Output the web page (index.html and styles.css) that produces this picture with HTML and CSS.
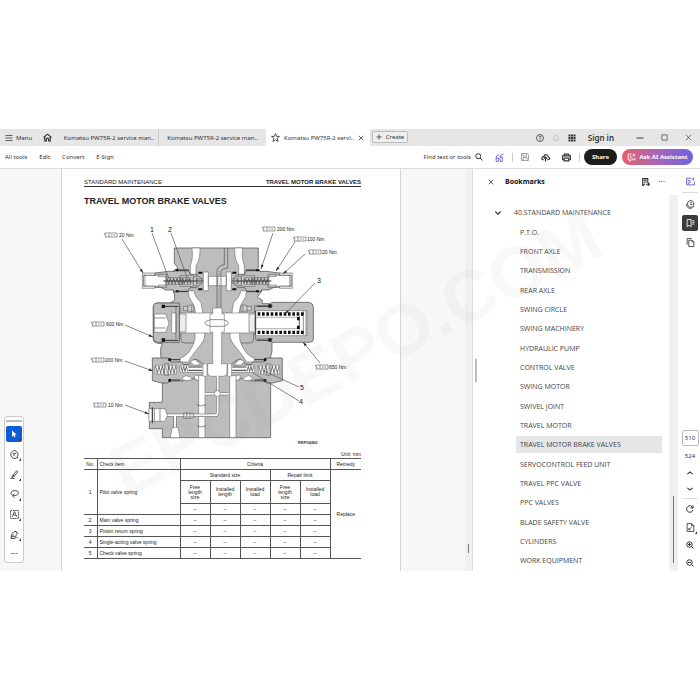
FILE: index.html
```html
<!DOCTYPE html>
<html lang="en">
<head>
<meta charset="utf-8">
<title>Komatsu PW75R-2 service manual</title>
<link rel="stylesheet" href="styles.css">
</head>
<body>
<div class="app">
  <header class="tabs">
    <button class="tab-menu"><svg class="ic" viewBox="0 0 16 16"><path d="M1 3h14M1 8h14M1 13h14"/></svg>Menu</button>
    <button class="tab-home" aria-label="Home"><svg class="ic ic-lg bold" viewBox="0 0 16 16"><path d="M1 8l7-6 7 6M3 7v7h3v-4q2-2 4 0v4h3V7"/></svg></button>
    <button class="tab">Komatsu PW75R-2 service man..</button>
    <button class="tab tab-second">Komatsu PW75R-2 service man..</button>
    <div class="tab active"><svg class="ic ic-lg" viewBox="0 0 16 16"><path d="M8 1l2 5h5l-4 3.500 1.500 5.500L8 12l-4.500 3L5 9.500 1 6h5z"/></svg><span>Komatsu PW75R-2 servi..</span><button class="close" aria-label="Close tab"><svg class="ic ic-xs bold" viewBox="0 0 16 16"><path d="M2 2l12 12M14 2L2 14"/></svg></button></div>
    <button class="create"><svg class="ic ic-xs bold" viewBox="0 0 16 16"><path d="M8 1v14M1 8h14"/></svg>Create</button>
    <div class="window">
      <button aria-label="Help"><svg class="ic" viewBox="0 0 16 16"><circle cx="8" cy="8" r="7"/><path d="M6 6q0-2 2-2t2 2q0 1-2 2v2M8 11v2"/></svg></button>
      <button aria-label="Notifications"><svg class="ic faint" viewBox="0 0 16 16"><path d="M2 12q2-2 2-6 1-4 4-4t4 4q0 4 2 6zM6 14h4"/></svg></button>
      <button aria-label="Apps"><svg class="ic solid" viewBox="0 0 16 16"><path d="M1 1h4v4H1zM6 1h4v4H6zM11 1h4v4h-4zM1 6h4v4H1zM6 6h4v4H6zM11 6h4v4h-4zM1 11h4v4H1zM6 11h4v4H6zM11 11h4v4h-4z"/></svg></button>
      <button class="signin">Sign in</button>
      <button class="winbtn" aria-label="Minimize"><svg class="ic bold" viewBox="0 0 16 16"><path d="M1 8h14"/></svg></button>
      <button class="winbtn" aria-label="Maximize"><svg class="ic ic-sm" viewBox="0 0 16 16"><path d="M2 2h12v12H2z"/></svg></button>
      <button class="winbtn" aria-label="Close"><svg class="ic ic-sm" viewBox="0 0 16 16"><path d="M2 2l12 12M14 2L2 14"/></svg></button>
    </div>
  </header>

  <nav class="toolbar">
    <button>All tools</button><button>Edit</button><button>Convert</button><button>E-Sign</button>
    <div class="actions">
      <button class="find">Find text or tools<svg class="ic bold" viewBox="0 0 16 16"><circle cx="6.500" cy="6.500" r="5"/><path d="M10 10l5 5"/></svg></button>
      <button aria-label="AI tools"><svg class="ic ic-lg violet" viewBox="0 0 16 16"><path d="M2 15V8q0-4 5-5M2 9h4v6H2M9 15V7h4v8H9M9 7q0-5 6-5"/></svg></button>
      <i class="rule"></i>
      <button aria-label="Save"><svg class="ic grey" viewBox="0 0 16 16"><path d="M1 1h12l2 2v12H1zM4 1v5h7V1M4 15V9h8v6"/></svg></button>
      <button aria-label="Upload"><svg class="ic ic-lg bold" viewBox="0 0 16 16"><path d="M5 12H3q-3-1-1-4 1-2 3-1 1-5 5-4 3 1 3 4 3 1 2 4-1 1-3 1h-1M8 15V8M5 10l3-3 3 3"/></svg></button>
      <button aria-label="Print"><svg class="ic ic-lg bold" viewBox="0 0 16 16"><path d="M4 5V2h8v3M4 12H1V5h14v7h-3M4 9h8v5H4z"/></svg></button>
      <i class="rule rule-end"></i>
      <button class="share">Share</button>
      <button class="ask"><svg class="ic ic-lg" viewBox="0 0 16 16"><path d="M8 2H2v10h3v3l3-3h6V8M5 6h3M5 9h5M12 1v5M9.500 3.500h5"/></svg>Ask AI Assistant</button>
    </div>
  </nav>

  <div class="workspace">
    <main class="doc">
      <div class="tools">
        <i class="grip"></i>
        <button class="selected" aria-label="Select"><svg class="ic" viewBox="0 0 16 16"><path d="M4 1l9 8-4 1 2 4-2 1-2-4-3 3z"/></svg></button>
        <button aria-label="Comment"><svg class="ic ic-lg" viewBox="0 0 16 16"><path d="M8 1a7 7 0 1 0 4 13h2l-1-2A7 7 0 0 0 8 1M5 6h6M5 9h4"/></svg></button>
        <button aria-label="Highlight"><svg class="ic ic-lg" viewBox="0 0 16 16"><path d="M4 11l7-9q2-1 3 1l-7 9-4 1zM1 15h7M5 9l3 2"/></svg></button>
        <button aria-label="Draw"><svg class="ic ic-lg" viewBox="0 0 16 16"><path d="M4 8Q0 7 2 4t7-3q6 0 6 4t-6 5H5M8 7l-4 3 4 4"/></svg></button>
        <button aria-label="Add text"><svg class="ic ic-lg" viewBox="0 0 16 16"><path d="M1 1h14v14H1z" stroke-dasharray="3 1"/><path d="M4 12l4-9 4 9M6 9h4"/></svg></button>
        <button aria-label="Sign"><svg class="ic ic-lg" viewBox="0 0 16 16"><path d="M2 13l2-7 5-4 4 4-3 5zM2 13l5-5M10 2l4 4M1 15h8l2-3 3 3"/></svg></button>
        <button class="more" aria-label="More tools">···</button>
      </div>

      <article class="page">
        <div class="running"><span>STANDARD MAINTENANCE</span><b>TRAVEL MOTOR BRAKE VALVES</b></div>
        <h1>TRAVEL MOTOR BRAKE VALVES</h1>
        <svg class="diagram" viewBox="84 215 277 235" role="img" aria-label="Section through the travel motor brake valves">
          <defs>
            <marker id="tip" viewBox="0 0 6 6" refX="6" refY="3" markerWidth="7" markerHeight="6" orient="auto"><path d="M0 1l6 2-6 2z" fill="#333"/></marker>
            <g id="wrench"><path d="M5 0H2Q0 0 0 1l2 1-1 2h4M5 0h8v4H5z" fill="#fff" stroke="#555" stroke-width=".6"/><path d="M7 2h4" stroke="#888" stroke-width="1" stroke-dasharray="1 .5"/></g>
            <g id="half">
              <!-- gallery down to the upper valve -->
              <path class="void" d="M141 15h24q1 35-12 53v30h-17V66q9-16 5-51z"/>
              <path class="void" d="M130 142q8 5 16 0 4 22 22 36l6 35h-22q-2-25-10-34l-10-18z"/>
              <!-- upper relief valve -->
              <path class="metal" d="M30 90l40-5h20v-5h40l5 14h20l15 14v12l-15 14h-20l-8 12H85v-5H62l-15-8H30z"/>
              <path class="void" d="M-5 97h67v33H-5z"/><path class="part" d="M-8 90h38v7H-4v32h34v7H-8zM0 95v37"/>
              <path class="part" d="M40 94h25v7H40zM40 126h25v7H40zM65 104h48v20H65zM105 98h40v32h-40zM113 104h24v20h-24z"/>
              <path class="coil" d="M66 106l5 16 5-16 5 16 5-16 5 16 5-16 5 16 5-16 5 16M113 107l5 14 5-14 5 14 5-14 5 14"/>
              <path class="part" d="M145 104l10-6v32l-10-6zM155 108h20v12h-20z"/><path class="thick" d="M55 114h120"/>
              <path class="seal" d="M92 79h9v6h-9zM92 142h9v6h-9zM160 86h12v6h-12zM160 136h12v6h-12z"/><path class="thick" d="M101 83h30M101 145h28"/>
              <path class="void" d="M175 87h15v56h-15zM190 100h27v28h-27z"/>
              <!-- pilot passages beside the main spool -->
              <path class="part" d="M115 190h14l5-4h12v20h-12l-5-3h-14zM128 187v18M140 187v18"/>
              <path class="line" d="M50 188h55v22M103 268v20H51M108 268v22q0 10 12 10h35"/>
              <!-- lower gallery -->
              <path class="void" d="M150 268h28q5 16-10 36l-30 38-8 15h-24l-2-10q20-8 28-20 18-27 18-43z"/>
              <!-- check valve -->
              <path class="metal" d="M22 345h48l6 12h34l6 8 18-2 10-12q10-6 18 3l16 12v30l-16 12q-10 8-16-2l-12 6-24 2H76l-8 6H50l-28-7z"/>
              <path class="void" d="M30 367h64v26H30zM105 367h71v21h-71z"/>
              <path class="coil" d="M32 369l5 22 5-22 5 22 5-22 5 22 5-22 5 22 5-22 5 22 5-22 5 22 5-22M108 370l4 15 4-15 4 15 4-15 4 15"/>
              <path class="part" d="M58 362h12v35H58z"/><path class="thick" d="M130 372h42M130 382h42"/>
              <path class="void" d="M136 357q12-12 20-3l10 12h-20zM114 402q10-8 20 0l8 8q-16 6-30 0zM150 395l12 5v12q-18 0-12-17z"/>
              <path class="seal" d="M70 346h8v8h-8zM70 408h8v8h-8z"/><path class="thick" d="M78 350h28M78 411h28"/>
              <path class="void" d="M161 398h19v186h-19z"/>
              <path class="void" d="M174 364q8-6 12 0v34q-6 6-12 0z"/>
            </g>
          </defs>

          <g transform="translate(145 243) scale(.3333)">
            <path class="metal" d="M88 15h252v60l-6 5 15 6v60l-12 16 15 10v10h24l5-4h112q12 4 12 14v96q0 10-12 10H381v28l-4 15v243H52V557H13v-79h39v-58l-4-6 3-58-4-20v-20l5-14q-24 0-27-10V190l8-10h42l14-8V150H85V84l14-8-11-16z"/>
            <use href="#half"/><use href="#half" transform="translate(434 0) scale(-1 1)"/>

            <path class="line" d="M248 15v60q-15 0-20 10v110M238 15v50q-18 2-22 18v112"/><path class="line" stroke-dasharray="2 3" d="M222 85v110"/>
            <!-- main spool -->
            <path class="void" d="M103 210h229v60H103z"/>
            <path class="part" d="M103 213h20v54h-20zM312 213h20v54h-20z"/>
            <path class="void" d="M203 213v-18h28v18h7v54h-8v90h-27v-90h-8v-54z"/><path class="line" d="M197 230h38M197 250h38M197 230q-18 4-18 10t18 10M236 230q14 4 14 10t-14 10"/>
            <!-- left plug -->
            <path class="metal" d="M25 190q0-10 12-10h66v118H37q-12-2-12-12z"/>
            <path class="void" d="M28 213h34l10 27-10 28H28zM80 210h13v60H80z"/><path class="line" d="M28 225h34M28 255h34M93 190v98"/>
            <path class="seal" d="M50 185h10v10H50zM50 286h10v10H50z"/><path class="thick" d="M60 190h40M60 292h40"/>
            <!-- piston return spring -->
            <path class="void" d="M330 203h156v75H330z"/><path class="line" d="M483 203v75M475 205v71"/>
            <path class="void" d="M330 223h133v34H330z"/><path class="line" d="M463 218v44"/><path class="seal" d="M456 222h8v10h-8zM456 248h8v10h-8zM370 184h10v10h-10zM370 286h10v10h-10z"/>
            <path class="spring" d="M338 213h138M338 268h138"/><path class="thick" d="M335 190h38M335 292h38M332 204v72"/>
            <!-- centre chamber and drain -->
            <path class="void" d="M188 362h58v28q0 10-12 10h-34q-12 0-12-10z"/>
            <path class="void plain" d="M205 340h23v25h-23z"/>
            <path class="pipe" d="M180 452h70M218 402v107q0 8-10 8H65M90 517v38"/><path class="pipe-in" d="M179 452h72M218 400v109q0 8-10 8H65M90 517v38"/>
            <circle class="void" cx="217" cy="452" r="9"/>
            <path class="part" d="M116 510h20l10 4v8l-10 4h-20zM125 510v16M135 510v16"/><path class="void" d="M82 553h17l6 31H76z"/>
            <path class="void" d="M12 497h48l7 20-7 18H12z"/><path class="line" d="M22 492v49M45 497v38M28 497v38"/><path class="thick" d="M22 494v46"/>
            <path class="line" d="M155 485q12 8 28 0M155 548q12 8 28 0"/>
          </g>

          <g class="leader">
            <path marker-end="url(#tip)" d="M122 239l21 34"/><path d="M152 233l17 46M171 233l17 47"/>
            <path marker-end="url(#tip)" d="M273 233l-12 36"/><path marker-end="url(#tip)" d="M295 242l-19 29"/><path marker-end="url(#tip)" d="M305 254l-22 20"/>
            <path marker-end="url(#tip)" d="M315 283l-30 31"/><path marker-end="url(#tip)" d="M125 325l28 12"/><path marker-end="url(#tip)" d="M320 363l-17-21"/>
            <path marker-end="url(#tip)" d="M125 361l28 10"/><path marker-end="url(#tip)" d="M125 405l24 9"/><path d="M299 387l-35-16M299 401l-46-28"/>
          </g>
          <use href="#wrench" x="104" y="233"/><use href="#wrench" x="262" y="227"/><use href="#wrench" x="293" y="237"/><use href="#wrench" x="308" y="250"/><use href="#wrench" x="91" y="322"/><use href="#wrench" x="91" y="358"/><use href="#wrench" x="93" y="403"/><use href="#wrench" x="315" y="365"/>
          <g class="torque"><text x="119" y="237">20 Nm</text><text x="277" y="231">200 Nm</text><text x="307" y="241">100 Nm</text><text x="322" y="254">20 Nm</text><text x="106" y="326">600 Nm</text><text x="105" y="362">200 Nm</text><text x="108" y="407">10 Nm</text><text x="329" y="369">650 Nm</text></g>
          <g class="callout"><text x="150" y="232">1</text><text x="168" y="232">2</text><text x="317" y="283">3</text><text x="299" y="404">4</text><text x="300" y="390">5</text></g>
          <text class="figure-id" x="298" y="444">RKP04260</text>
        </svg>
        <p class="unit">Unit: mm</p>
        <table class="spec">
          <colgroup><col class="c-no"><col class="c-item"><col><col><col><col><col><col class="c-rem"></colgroup>
          <tr><th>No.</th><th class="left">Check item</th><th colspan="5">Criteria</th><th>Remedy</th></tr>
          <tr><td rowspan="3">1</td><td rowspan="3" class="left">Pilot valve spring</td><th colspan="3">Standard size</th><th colspan="2">Repair limit</th><td rowspan="7">Replace</td></tr>
          <tr class="tall"><th>Free<br>length<br>size</th><th>Installed<br>length</th><th>Installed<br>load</th><th>Free<br>length<br>size</th><th>Installed<br>load</th></tr>
          <tr><td>–</td><td>–</td><td>–</td><td>–</td><td>–</td></tr>
          <tr><td>2</td><td class="left">Main valve spring</td><td>–</td><td>–</td><td>–</td><td>–</td><td>–</td></tr>
          <tr><td>3</td><td class="left">Piston return spring</td><td>–</td><td>–</td><td>–</td><td>–</td><td>–</td></tr>
          <tr><td>4</td><td class="left">Single-acting valve spring</td><td>–</td><td>–</td><td>–</td><td>–</td><td>–</td></tr>
          <tr><td>5</td><td class="left">Check valve spring</td><td>–</td><td>–</td><td>–</td><td>–</td><td>–</td></tr>
        </table>
      </article>
      <div class="track doc-track"><i></i></div>
    </main>

    <aside class="panel">
      <i class="splitter"></i>
      <div class="panel-body">
        <div class="panel-head">
          <button aria-label="Close panel"><svg class="ic ic-xs bold" viewBox="0 0 16 16"><path d="M2 2l12 12M14 2L2 14"/></svg></button>
          <h2>Bookmarks</h2>
          <button aria-label="Add bookmark"><svg class="ic ic-lg bold" viewBox="0 0 16 16"><path d="M3 14V1h9v7M3 14l4-4M5 4h5M5 7h5M9 11h6M12 8l3 3-3 3"/></svg></button>
          <button class="dots" aria-label="Options">···</button>
        </div>
        <button class="chapter"><svg class="ic ic-xs heavy" viewBox="0 0 16 16"><path d="M1 4l7 7 7-7"/></svg>40.STANDARD MAINTENANCE</button>
        <ul class="bookmarks">
          <li><a href="#">P.T.O.</a></li><li><a href="#">FRONT AXLE</a></li><li><a href="#">TRANSMISSION</a></li><li><a href="#">REAR AXLE</a></li><li><a href="#">SWING CIRCLE</a></li><li><a href="#">SWING MACHINERY</a></li><li><a href="#">HYDRAULIC PUMP</a></li><li><a href="#">CONTROL VALVE</a></li><li><a href="#">SWING MOTOR</a></li><li><a href="#">SWIVEL JOINT</a></li><li><a href="#">TRAVEL MOTOR</a></li><li><a href="#" class="current">TRAVEL MOTOR BRAKE VALVES</a></li><li><a href="#">SERVOCONTROL FEED UNIT</a></li><li><a href="#">TRAVEL PPC VALVE</a></li><li><a href="#">PPC VALVES</a></li><li><a href="#">BLADE SAFETY VALVE</a></li><li><a href="#">CYLINDERS</a></li><li><a href="#">WORK EQUIPMENT</a></li>
        </ul>
      </div>
      <div class="track panel-track"><i></i></div>
    </aside>

    <aside class="rail">
      <div class="rail-top">
        <button aria-label="Summary"><svg class="ic ic-lg violet" viewBox="0 0 16 16"><path d="M9 2H1v12h14V8M3 6h5M3 9h6M3 12h3M13 1v5M10 3.500h5"/></svg></button>
        <i></i>
        <button aria-label="Comments"><svg class="ic ic-lg" viewBox="0 0 16 16"><path d="M9 1a6 6 0 1 0 3 11h2l-1-2A6 6 0 0 0 9 1M7 5h4M7 8h4M2 6q-3 5 2 8 4 2 7 0"/></svg></button>
        <button class="on" aria-label="Bookmarks"><svg class="ic ic-lg" viewBox="0 0 16 16"><path d="M2 1h7v13l-3.500-3L2 14zM11 3h4M11 6h4M11 9h4"/></svg></button>
        <button aria-label="Pages"><svg class="ic ic-lg" viewBox="0 0 16 16"><path d="M5 4h6l3 3v8H5zM11 4v3h3M2 12V1h8"/></svg></button>
      </div>
      <div class="rail-bottom">
        <input aria-label="Page number" value="510"><span>524</span>
        <button class="step" aria-label="Previous page"><svg class="ic ic-xs heavy" viewBox="0 0 16 16"><path d="M1 11l7-6 7 6"/></svg></button>
        <button class="step" aria-label="Next page"><svg class="ic ic-xs heavy" viewBox="0 0 16 16"><path d="M1 5l7 6 7-6"/></svg></button>
        <i></i>
        <button aria-label="Rotate"><svg class="ic bold" viewBox="0 0 16 16"><path d="M14 10A6.500 6.500 0 1 1 12 3l2 2M14 1v5H9"/></svg></button>
        <button class="corner" aria-label="Page display"><svg class="ic ic-lg" viewBox="0 0 16 16"><path d="M2 1h8l4 4v10H2zM10 1v4h4M5 12l5-5M5 9v3h3"/></svg></button>
        <button aria-label="Zoom in"><svg class="ic bold" viewBox="0 0 16 16"><circle cx="7" cy="7" r="5.500"/><path d="M11 11l4 4M4 7h6M7 4v6"/></svg></button>
        <button aria-label="Zoom out"><svg class="ic bold" viewBox="0 0 16 16"><circle cx="7" cy="7" r="5.500"/><path d="M11 11l4 4M4 7h6"/></svg></button>
      </div>
    </aside>
    <svg class="watermark" viewBox="0 168 700 403"><text transform="translate(126 498) rotate(-27)">EPCDEPO.COM</text></svg>
  </div>
</div>
</body>
</html>
```
FILE: styles.css
```css
* { box-sizing: border-box; }
body { margin: 0; min-height: 100vh; display: flex; align-items: center; background: #fff; color: #333; font: 6px/8px "Noto Sans", sans-serif; }
button, input { margin: 0; padding: 0; border: 0; background: none; color: inherit; font: inherit; white-space: nowrap; }
button { display: flex; align-items: center; justify-content: center; }
.app { width: 100%; }

.ic { width: 8px; height: 8px; flex: none; fill: none; stroke: #333; stroke-width: 1.5; }
.ic-lg { width: 9px; height: 9px; }
.ic-sm { width: 7px; height: 7px; }
.ic-xs { width: 6px; height: 6px; }
.bold { stroke-width: 2; }
.heavy { stroke-width: 3; }
.violet { stroke: #5c56c8; }
.grey { stroke: #888; }
.faint { stroke: #bbb; }
.solid { fill: #333; stroke: none; }

.tabs { display: flex; height: 17px; background: #e6e6e6; }
.tab-menu { gap: 3px; padding-left: 5px; width: 34px; justify-content: flex-start; }
.tab-home { width: 26px; }
.tab { width: 100px; justify-content: center; }
.tab-home + .tab { width: 98px; }
.tab-second { width: 108px; border-left: 1px solid #ccc; }
.active { display: flex; align-items: center; gap: 4px; width: 104px; padding-left: 5px; justify-content: flex-start; background: #fff; }
.create { gap: 4px; width: 36px; height: 12px; margin: 2px 0 0 2px; border: 1px solid #bbb; border-radius: 2px; background: #efefef; }
.window { display: flex; align-items: center; gap: 8px; margin-left: auto; padding-right: 4px; }
.signin { margin: 0 10px 0 4px; font-size: 8px; font-weight: 600; }
.winbtn { width: 16px; }

.toolbar { display: flex; align-items: center; gap: 12px; height: 22px; padding: 0 7px 0 5px; }
.actions { display: flex; align-items: center; gap: 12px; margin-left: auto; }
.find { gap: 4px; }
.actions .rule { width: 1px; height: 9px; margin: 0 -4px; background: #ccc; }
.actions .rule-end { margin-right: -8px; }
.share { width: 33px; height: 16px; border-radius: 8px; background: #1c1c1c; color: #fff; font-weight: 700; }
.ask { gap: 3px; width: 71px; height: 16px; margin-left: -7px; border-radius: 8px; background: linear-gradient(90deg, #e6616c, #a866b8 50%, #6c63e0); color: #fff; font-weight: 700; }
.ask .ic { stroke: #fff; }

.workspace { position: relative; display: flex; height: 403px; border-top: 1px solid #ddd; overflow: hidden; }
.doc { position: relative; display: flex; flex: 1; background: #f7f7f7; }
.page { flex: 1; margin: 0 64px 0 61px; padding: 10px 39px 0 22px; border: solid #d5d5d5; border-width: 0 1px; background: #fff; color: #222; font-family: "Liberation Sans", Arial, sans-serif; }
.running { display: flex; justify-content: space-between; border-bottom: 1px solid #333; line-height: 7px; }
h1 { margin: 8px 0; font-size: 9px; line-height: 12px; font-weight: 700; }
.diagram { display: block; width: 100%; }
.unit { margin: 0; line-height: 8px; text-align: right; font-size: 5px; }

.metal { fill: #bdbdbd; stroke: #444; stroke-width: 2; }
.void { fill: #fff; stroke: #555; stroke-width: 1.5; }
.plain { stroke: none; }
.part { fill: #ddd; fill-opacity: .5; stroke: #444; stroke-width: 1.5; }
.line { fill: none; stroke: #555; stroke-width: 2; }
.thick { fill: none; stroke: #333; stroke-width: 3; }
.coil { fill: none; stroke: #333; stroke-width: 2; }
.seal { fill: #111; }
.spring { stroke: #111; stroke-width: 10; stroke-dasharray: 8 5; }
.pipe { fill: none; stroke: #555; stroke-width: 9; }
.pipe-in { fill: none; stroke: #fff; stroke-width: 6; }
.leader path { fill: none; stroke: #555; stroke-width: .7; }
.torque { font-size: 5px; fill: #222; }
.callout { font-size: 7px; fill: #111; }
.figure-id { font-size: 4px; font-weight: 700; fill: #333; }

.spec { width: 100%; table-layout: fixed; border-collapse: collapse; border: solid #444; border-width: 1px 0; font-size: 5px; line-height: 5px; text-align: center; }
.spec tr { height: 11px; }
.spec .tall { height: 23px; }
.spec th, .spec td { padding: 0; border: 1px solid #555; font-weight: 400; }
.spec tr > :first-child[rowspan], .spec tr:first-child > :first-child, .spec tr:nth-child(n+5) > :first-child { border-left: 0; }
.spec tr:first-child > :last-child, .spec td[rowspan="7"] { border-right: 0; }
.spec .left { padding-left: 2px; text-align: left; }
.c-no { width: 13px; }
.c-item { width: 83px; }
.c-rem { width: 31px; }

.tools { position: absolute; left: 4px; bottom: 8px; display: flex; flex-direction: column; align-items: center; gap: 4px; width: 20px; padding: 3px 1px 0; border: 1px solid #ccc; border-radius: 3px; background: #fff; }
.grip { width: 100%; height: 2px; background: #bbb; }
.tools button { position: relative; width: 16px; height: 16px; border-radius: 2px; }
.tools button:not(.more)::after, .corner::after { content: ""; position: absolute; right: 1px; bottom: 1px; border: solid transparent; border-width: 3px 0 0 3px; border-bottom: 0; border-right: 2px solid #333; }
.tools .selected { background: #0b5cd5; }
.tools .selected .ic { fill: #fff; stroke: none; }
.tools .selected::after { border-right-color: #fff; }
.more, .dots { font-size: 9px; }

.track { position: relative; background: #f0f0f0; }
.track i { position: absolute; width: 1px; background: #777; }
.doc-track { width: 8px; border-right: 1px solid #ddd; }
.doc-track i { left: 3px; bottom: 18px; height: 9px; }

.panel { position: relative; display: flex; width: 205px; background: #fff; }
.splitter { position: absolute; left: 2px; top: 190px; width: 2px; height: 23px; background: #bbb; }
.panel-body { flex: 1; font-family: "Open Sans", "Noto Sans", sans-serif; }
.panel-head { display: flex; align-items: center; height: 26px; padding: 0 4px 0 15px; }
.panel-head h2 { flex: 1; margin: 0 0 0 11px; color: #111; font-size: 7px; font-weight: 700; }
.dots { margin-left: 8px; }
.chapter { gap: 13px; height: 19px; margin: 8px 0 0 22px; font-size: 7px; color: #444; }
.bookmarks { margin: 2px 0 0; padding: 0 7px 0 43px; list-style: none; }
.bookmarks a { display: flex; align-items: center; height: 17px; margin-bottom: 2px; padding-left: 4px; color: #444; font-size: 7px; text-decoration: none; }
.bookmarks li:nth-child(3n) a { margin-bottom: 3px; }
.bookmarks .current { background: #e6e6e6; }
.panel-track { width: 9px; margin-top: 26px; }
.panel-track i { right: 4px; bottom: 8px; height: 67px; }

.rail { display: flex; flex-direction: column; justify-content: space-between; width: 22px; padding: 4px 0 0 2px; background: #fff; }
.rail-top, .rail-bottom { display: flex; flex-direction: column; align-items: center; }
.rail-top { gap: 3px; }
.rail button { position: relative; width: 16px; height: 16px; border-radius: 2px; }
.rail i { width: 16px; height: 1px; background: #ddd; }
.rail .on { background: #3b3b3b; }
.on .ic { stroke: #fff; }
.rail-bottom { gap: 2px; }
.rail input { width: 17px; height: 16px; border: 1px solid #bbb; border-radius: 2px; text-align: center; }
.rail span { margin: 4px 0; }
.rail .step { height: 14px; }

.watermark { position: absolute; inset: 0; width: 100%; height: 100%; pointer-events: none; fill: #999; opacity: .06; font: 700 72px "Liberation Sans", sans-serif; }
```
